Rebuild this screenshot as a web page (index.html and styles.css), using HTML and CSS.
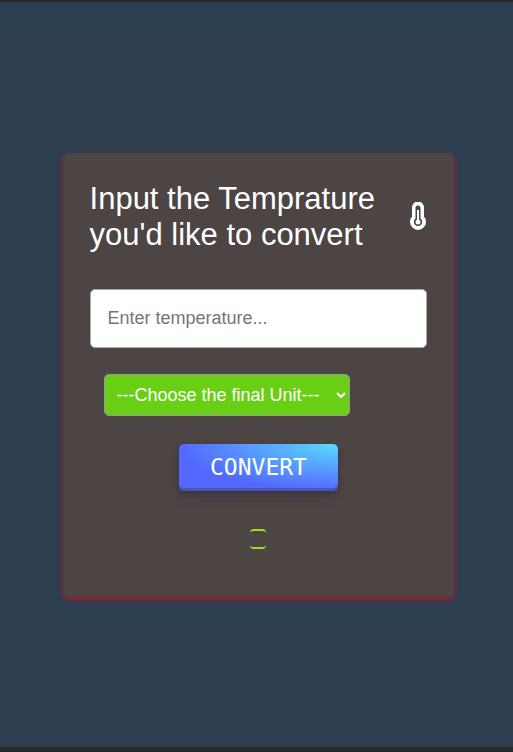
FILE: index.html
```html
<!DOCTYPE html>
<html lang="en">
<head>
<meta charset="utf-8">
<meta name="viewport" content="width=device-width, initial-scale=1">
<title>Temperature converter</title>
<link rel="stylesheet" href="styles.css">
</head>
<body>
<main class="card">
  <header class="card-header">
    <h1 class="title"><label for="temperature">Input the Temprature you'd like to convert</label></h1>
    <svg class="thermometer" viewBox="0 0 18 30" aria-hidden="true">
      <path class="glass" d="M4 5.500a5 5 0 0 1 10 0V15a7 7 0 1 1-10 0z"/>
      <path class="tube" d="M6.500 6a2.500 2.500 0 0 1 5 0v10.500a4.200 4.200 0 1 1-5 0z"/>
      <path class="mercury" d="M9 8v12"/>
      <circle class="bulb" cx="9" cy="20" r="2.500"/>
    </svg>
  </header>
  <form class="form">
    <input class="field" id="temperature" type="text" placeholder="Enter temperature...">
    <select class="unit" aria-label="Final unit">
      <option>---Choose the final Unit---</option>
      <option>Celsius</option>
      <option>Fahrenheit</option>
      <option>Kelvin</option>
    </select>
    <button class="convert" type="button">CONVERT</button>
    <output class="result" for="temperature"></output>
  </form>
</main>
</body>
</html>
```
FILE: styles.css
```css
* { box-sizing: border-box; }

body {
  margin: 0;
  min-height: 100vh;
  display: flex;
  align-items: center;
  justify-content: center;
  padding-left: 4px;
  background: #2c3e50;
  border-top: 2px solid #282828;
  border-bottom: 5px solid #2a2a2c;
  color: #fff;
  font-family: "Liberation Sans", Arial, sans-serif;
}

.card {
  width: 77%;
  padding: 28px 27px 48px;
  border-radius: 6px;
  background: #4d4444;
  box-shadow: 0 2px 5px #b8182a;
}

.card-header {
  display: flex;
  align-items: center;
  justify-content: space-between;
}

.title {
  margin: 0;
  font-size: 31px;
  font-weight: 400;
  line-height: 36px;
}

.thermometer {
  flex: none;
  width: 18px;
  height: 30px;
}

.glass { fill: #fff; stroke: #fff; stroke-width: 2; }
.tube { fill: #4d4444; }
.mercury { fill: none; stroke: #fff; stroke-width: 2; }
.bulb { fill: #fff; }

.form {
  display: flex;
  flex-direction: column;
  align-items: center;
  margin-top: 36px;
}

.field {
  width: 100%;
  height: 59px;
  padding: 0 17px;
  border: 1px solid #aaa;
  border-radius: 5px;
  background: #fff;
  color: #333;
  font-family: inherit;
  font-size: 18px;
}

.field::placeholder { color: #757575; }

.unit {
  align-self: flex-start;
  height: 42px;
  margin: 26px 0 28px 14px;
  padding: 0 12px 0 8px;
  border: 1px solid #999;
  border-radius: 5px;
  background: #68cf14;
  color: #fff;
  font-family: inherit;
  font-size: 18px;
}

.convert {
  height: 47px;
  padding: 0 31px;
  border: 0;
  border-radius: 5px;
  background: radial-gradient(100% 100% at 100% 0, #5adaff 0, #5468ff 100%);
  box-shadow: rgba(45, 35, 66, 0.4) 0 2px 4px, rgba(45, 35, 66, 0.3) 0 7px 13px -3px, rgba(58, 65, 111, 0.5) 0 -3px 0 inset;
  color: #fff;
  font-family: "DejaVu Sans Mono", monospace;
  font-size: 23px;
}

.result {
  width: 16px;
  height: 20px;
  margin-top: 38px;
  border: 0 solid #9be02a;
  border-width: 2px 0;
  border-radius: 4px;
}
```
